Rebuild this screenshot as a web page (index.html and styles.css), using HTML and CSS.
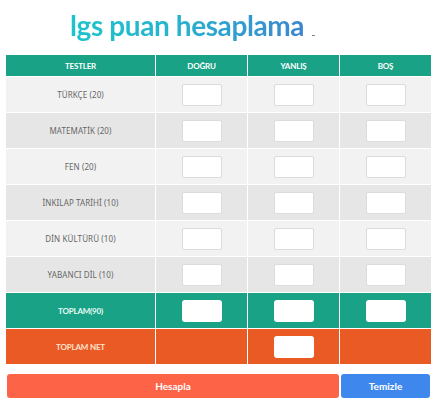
FILE: index.html
```html
<!DOCTYPE html>
<html lang="tr">
<head>
  <meta charset="UTF-8">
  <meta name="viewport" content="width=device-width, initial-scale=1.0">
  <title>LGS Puan Hesaplama</title>
  <link rel="stylesheet" href="styles.css">
</head>
<body>
  <div class="wrap">
    <h1 class="title"><span class="title-text">lgs puan hesaplama</span><span class="title-dot"></span></h1>

    <!-- Net hesaplama tablosu -->
    <table class="lgs-table">
      <colgroup>
        <col class="col-test">
        <col class="col-num">
        <col class="col-num">
        <col class="col-num">
      </colgroup>
      <thead>
        <tr>
          <th>TESTLER</th>
          <th>DOĞRU</th>
          <th>YANLIŞ</th>
          <th>BOŞ</th>
        </tr>
      </thead>
      <tbody>
        <tr class="light">
          <td class="label">TÜRKÇE (20)</td>
          <td><input type="text"></td>
          <td><input type="text"></td>
          <td><input type="text"></td>
        </tr>
        <tr class="dark">
          <td class="label">MATEMATİK (20)</td>
          <td><input type="text"></td>
          <td><input type="text"></td>
          <td><input type="text"></td>
        </tr>
        <tr class="light">
          <td class="label">FEN (20)</td>
          <td><input type="text"></td>
          <td><input type="text"></td>
          <td><input type="text"></td>
        </tr>
        <tr class="dark">
          <td class="label">İNKILAP TARİHİ (10)</td>
          <td><input type="text"></td>
          <td><input type="text"></td>
          <td><input type="text"></td>
        </tr>
        <tr class="light">
          <td class="label">DİN KÜLTÜRÜ (10)</td>
          <td><input type="text"></td>
          <td><input type="text"></td>
          <td><input type="text"></td>
        </tr>
        <tr class="dark">
          <td class="label">YABANCI DİL (10)</td>
          <td><input type="text"></td>
          <td><input type="text"></td>
          <td><input type="text"></td>
        </tr>
        <tr class="total">
          <td class="label">TOPLAM(90)</td>
          <td><input type="text" class="round"></td>
          <td><input type="text" class="round"></td>
          <td><input type="text" class="round"></td>
        </tr>
        <tr class="net">
          <td class="label">TOPLAM NET</td>
          <td></td>
          <td><input type="text" class="round"></td>
          <td></td>
        </tr>
      </tbody>
    </table>

    <div class="actions">
      <button class="btn btn-calc">Hesapla</button>
      <button class="btn btn-clear">Temizle</button>
    </div>
  </div>
</body>
</html>
```

FILE: styles.css
```css
/* Basic styling */
body {
  margin: 0;
  background: #fff;
  font-family: 'Lato', sans-serif;
}

.wrap {
  padding: 0 5px;
}

.title {
  margin: 0;
  padding: 8px 0 0 65px;
  height: 54px;
  box-sizing: border-box;
  font-size: 28px;
  font-weight: 700;
  letter-spacing: -0.4px;
  line-height: 34px;
}

.title-text {
  background: linear-gradient(90deg, #1cc4cb 0%, #27b3cf 45%, #3c86cf 100%);
  -webkit-background-clip: text;
  background-clip: text;
  color: transparent;
}

.title-dot {
  display: inline-block;
  width: 3px;
  height: 1px;
  margin-left: 8px;
  background: #6f8aa8;
  vertical-align: 0;
}

/* Table */
.lgs-table {
  width: 426px;
  border-collapse: collapse;
  table-layout: fixed;
}

.col-test {
  width: 150px;
}

.col-num {
  width: 92px;
}

.lgs-table th,
.lgs-table td {
  border: 1px solid #fff;
  text-align: center;
  padding: 0;
}

.lgs-table th {
  height: 21px;
  background: #1aa286;
  color: #fff;
  font-size: 8px;
  font-weight: 700;
  letter-spacing: -0.2px;
}

.lgs-table td {
  height: 35px;
}

.label {
  font-family: 'Noto Sans', sans-serif;
  font-size: 8px;
  font-weight: 400;
  letter-spacing: 0.1px;
  color: #666;
}

.light td {
  background: #f2f2f2;
}

.dark td {
  background: #e6e6e6;
}

.total td {
  background: #1aa286;
}

.net td {
  background: #ea5a25;
}

.total .label,
.net .label {
  font-family: 'Lato', sans-serif;
  font-weight: 700;
  font-size: 8px;
  letter-spacing: -0.2px;
}

.total .label {
  color: #e8fbf5;
}

.net .label {
  color: #ffe3cf;
}

.lgs-table input {
  display: block;
  margin: 0 auto;
  width: 40px;
  height: 22px;
  box-sizing: border-box;
  border: 1px solid #dcdcdc;
  border-radius: 2px;
  background: #fff;
  padding: 0;
  outline: none;
}

.lgs-table input.round {
  border: none;
  border-radius: 3px;
}

/* Buttons */
.actions {
  display: flex;
  gap: 2px;
  margin: 9px 2px 0;
}

.btn {
  height: 24px;
  border: none;
  border-radius: 3px;
  color: #fff;
  font-family: 'Lato', sans-serif;
  font-size: 10px;
  font-weight: 700;
  cursor: pointer;
}

.btn-calc {
  flex: 1;
  background: #fc6347;
}

.btn-clear {
  width: 89px;
  background: #3e87ec;
}
```
